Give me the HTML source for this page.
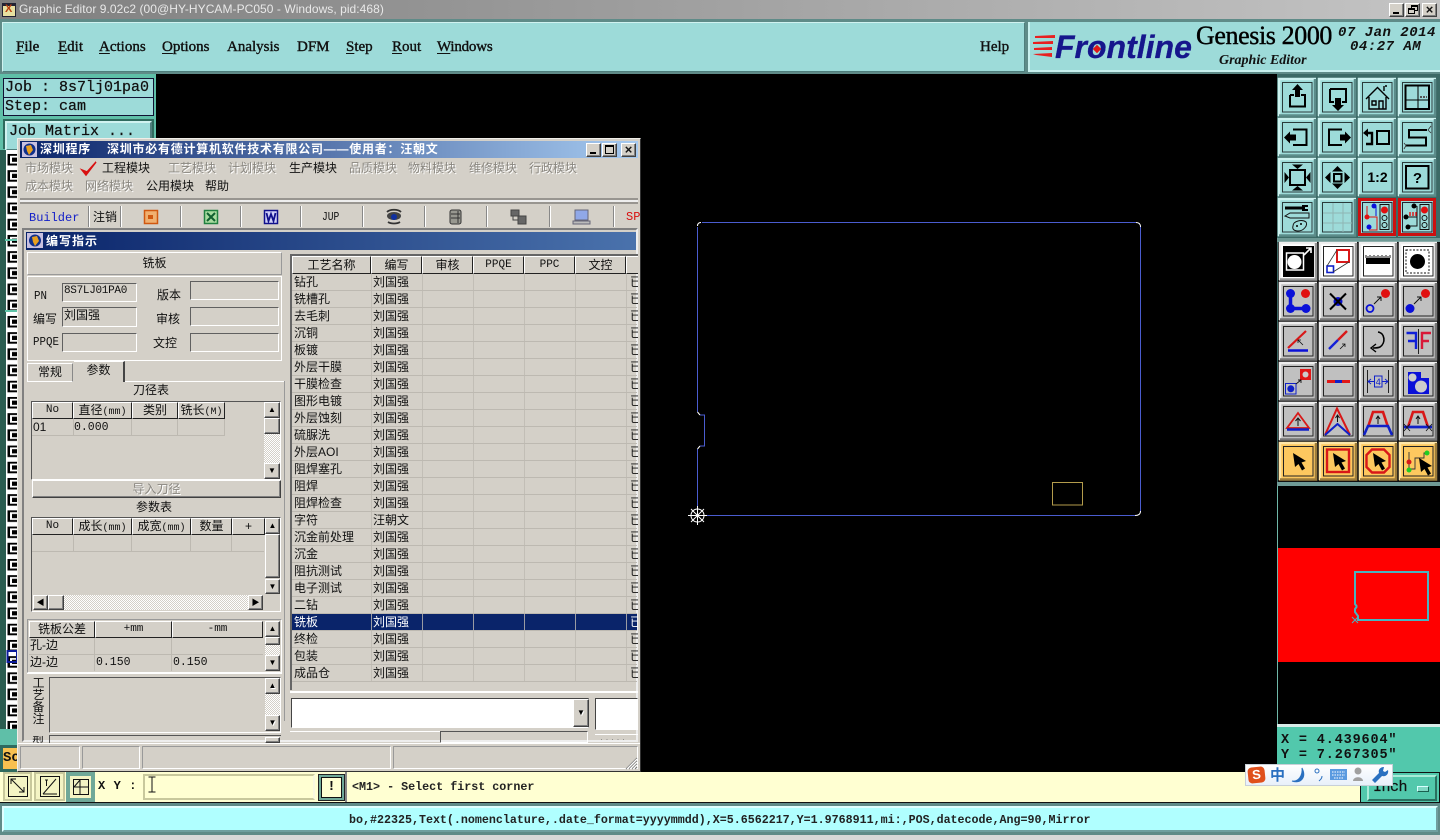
<!DOCTYPE html>
<html><head><meta charset="utf-8"><title>Graphic Editor</title>
<style>
html,body{margin:0;padding:0;background:#000}
#p{position:relative;width:1440px;height:840px;overflow:hidden;background:#000;font-family:"Liberation Sans","WenQuanYi Zen Hei","Noto Sans CJK SC",sans-serif;font-size:12px;color:#111}
#p div,#p span.a{position:absolute;box-sizing:border-box}
#p svg{position:absolute;left:0;top:0}
.t{white-space:nowrap}
.up{background:#d4d0c8;border:1px solid;border-color:#fff #404040 #404040 #fff;box-shadow:inset -1px -1px 0 #808080}
.sk{background:#d4d0c8;border:1px solid;border-color:#606060 #fff #fff #606060}
.dis{color:#8a8780;text-shadow:1px 1px 0 #fff}
.m{font-family:"Liberation Serif",serif;font-size:15px;-webkit-text-stroke:.4px #111;color:#111;white-space:nowrap;top:39px}
.m u{text-underline-offset:2px}
.mo{font-family:"Liberation Mono",monospace}
.h{background:#d4d0c8;border:1px solid;border-color:#fff #222 #222 #fff;text-align:center;line-height:14px;height:17px;white-space:nowrap;overflow:hidden}
.d{background:repeating-conic-gradient(#d4d0c8 0 25%,#fff 0 50%) 0 0/2px 2px}
.ar{font-size:8px;line-height:14px;text-align:center;color:#000}
.r{position:relative!important;height:17px;border-bottom:1px solid #bdb9b1;line-height:16px}
.r b{position:absolute;left:2px;font-weight:normal;white-space:nowrap}
.r b+b{left:81px}
.r i{position:absolute;left:338px;font-style:normal}
.s{background:#0a246a;color:#fff;border-bottom-color:#bdb9b1}
.v{width:1px;background:#bdb9b1}
</style></head><body><div id="p">

<!-- canvas -->
<svg width="1440" height="840" viewBox="0 0 1440 840">
<g fill="none" stroke="#4a5ccf" stroke-width="1">
<path d="M702 222.5H1136M1140.5 227V511M1135 515.5H697.5V449M697.5 412V227M700 415H704.5V446H700"/>
</g>
<g fill="none" stroke="#fff" stroke-width="1">
<path d="M697.5 226Q697.5 222.5 701 222.5M1136 222.5Q1140.5 222.5 1140.5 227M1140.5 511Q1140.5 515.5 1135 515.5M697.5 412L700 415M700 446L697.5 449"/>
<circle cx="697.5" cy="515.5" r="6.5"/><path d="M688 515.5H707M697.5 506V525M691 509L704 522M704 509L691 522"/>
</g>
<rect x="1052.5" y="482.5" width="30" height="22.5" fill="none" stroke="#b39c4c"/>
</svg>

<!-- title bar -->
<div style="left:0;top:0;width:1440px;height:19px;background:linear-gradient(90deg,#7f7f7f,#c4c4c4)"></div>
<div style="left:2px;top:3px;width:14px;height:14px;background:#e8e0a0;border:1px solid #223;border-top:3px solid #223"></div>
<div class="t" style="left:5px;top:4px;color:#b84010;font-weight:bold;font-size:11px;line-height:11px">X</div>
<div class="t" style="left:19px;top:2px;color:#e8e8e8;font-size:12px;letter-spacing:.05px">Graphic Editor 9.02c2 (00@HY-HYCAM-PC050 - Windows, pid:468)</div>
<div class="up" style="left:1389px;top:3px;width:15px;height:14px"><div style="left:3px;bottom:2px;width:6px;height:2px;background:#000"></div></div>
<div class="up" style="left:1405px;top:3px;width:15px;height:14px"><div style="left:5px;top:1px;width:7px;height:6px;border:1px solid #000;border-top-width:2px"></div><div style="left:2px;top:4px;width:7px;height:6px;border:1px solid #000;border-top-width:2px;background:#d4d0c8"></div></div>
<div class="up" style="left:1422px;top:3px;width:15px;height:14px;font-size:13px;line-height:11px;text-align:center;font-weight:bold">×</div>

<!-- menu bar -->
<div style="left:0;top:19px;width:1440px;height:55px;background:#5f8b88"></div>
<div style="left:2px;top:22px;width:1023px;height:50px;background:#9ddbd9;border:1px solid;border-color:#d0f2f0 #4f7f7d #4f7f7d #d0f2f0"></div>
<div class="m" style="left:16px"><u>F</u>ile</div>
<div class="m" style="left:58px"><u>E</u>dit</div>
<div class="m" style="left:99px"><u>A</u>ctions</div>
<div class="m" style="left:162px"><u>O</u>ptions</div>
<div class="m" style="left:227px">Analysis</div>
<div class="m" style="left:297px">DFM</div>
<div class="m" style="left:346px"><u>S</u>tep</div>
<div class="m" style="left:392px"><u>R</u>out</div>
<div class="m" style="left:437px;letter-spacing:-.2px"><u>W</u>indows</div>
<div class="m" style="left:980px">Help</div>

<!-- logo panel -->
<div style="left:1028px;top:22px;width:412px;height:50px;background:#9ddbd9;border-bottom:2px solid #c9f1ef;border-left:2px solid #c9f1ef"></div>
<svg width="1440" height="80" viewBox="0 0 1440 80"><path d="M1035 36L1055 35V38L1035 38ZM1033 42L1053 41V44L1033 44ZM1034 48L1052 47V50L1034 50ZM1033 54L1052 53V57L1036 55Z" fill="#e82020"/></svg>
<div class="t" style="left:1055px;top:29px;font:italic bold 32px/36px 'Liberation Sans',sans-serif;color:#16168c;-webkit-text-stroke:.3px #16168c">Frontline</div>
<div style="left:1094px;top:46px;width:6px;height:6px;background:#e01818;transform:rotate(45deg)"></div>
<div class="t" style="left:1196px;top:20px;font:26px/32px 'Liberation Serif',serif;-webkit-text-stroke:.4px #000;color:#000;letter-spacing:-.4px">Genesis 2000</div>
<div class="t" style="left:1219px;top:53px;font:italic bold 14px/16px 'Liberation Serif',serif;color:#111">Graphic Editor</div>
<div class="t mo" style="left:1338px;top:25px;font-style:italic;font-weight:bold;font-size:14px;line-height:16px;color:#111;letter-spacing:.5px">07 Jan 2014</div>
<div class="t mo" style="left:1350px;top:39px;font-style:italic;font-weight:bold;font-size:14px;line-height:16px;color:#111;letter-spacing:.5px">04:27 AM</div>

<!-- left job panel -->
<div style="left:0;top:74px;width:156px;height:76px;background:#5fbfa8"></div>
<div class="mo t" style="left:3px;top:78px;width:151px;height:20px;background:#9ddbd9;border:1px solid #113;line-height:18px;font-size:15px;padding-left:1px;-webkit-text-stroke:.25px #111">Job : 8s7lj01pa0</div>
<div class="mo t" style="left:3px;top:97px;width:151px;height:19px;background:#9ddbd9;border:1px solid #113;line-height:17px;font-size:15px;padding-left:1px;-webkit-text-stroke:.25px #111">Step: cam</div>
<div style="left:3px;top:119px;width:151px;height:30px;background:#2f6a5e"></div>
<div class="mo t" style="left:5px;top:121px;width:147px;height:30px;background:#9ddbd9;border:2px solid;border-color:#d0f2f0 #4f7f7d #4f7f7d #d0f2f0;line-height:18px;font-size:15px;padding-left:2px;-webkit-text-stroke:.25px #111">Job Matrix ...</div>

<!-- left strip -->
<svg width="20" height="840" viewBox="0 0 20 840">
<defs><pattern id="gl" width="20" height="16.2" patternUnits="userSpaceOnUse" y="152"><rect width="20" height="16.2" fill="#fff"/><rect x="0" width="6" height="16.2" fill="#2a5c50"/><path d="M7.5 2H17V3.8H10V11.5H17V13.5H7.5Z" fill="#000"/><path d="M12 5.6H17V9.8H12Z" fill="#000"/></pattern></defs>
<rect y="150" width="20" height="580" fill="url(#gl)"/>
<rect y="239" x="5" width="15" height="2" fill="#60c4a8"/><rect y="310" x="5" width="15" height="2" fill="#60c4a8"/>
<path d="M7.5 651H17V662H7.5Z" fill="none" stroke="#0a1a9a" stroke-width="2"/>
<rect y="729" width="20" height="16" fill="#5fbfa8"/><rect y="745" width="20" height="27" fill="#2f6a5e"/>
</svg>
<div class="t" style="left:3px;top:748px;width:16px;height:21px;background:#f8c050;font:bold 14px/20px 'Liberation Mono',monospace">Sc</div>

<!-- right toolbar -->
<div style="left:1277px;top:74px;width:163px;height:412px;background:#3c6a66"></div>
<svg width="1440" height="490" viewBox="0 0 1440 490">
<defs>
<g id="bt"><rect width="38" height="38.5" fill="#9ddbd9"/><path d="M1 38V1H38" fill="none" stroke="#cdf2f0" stroke-width="2.5"/><path d="M37 1V37.5H1" fill="none" stroke="#5c8c8a" stroke-width="2.5"/><rect x="4.5" y="4.5" width="29.5" height="29.5" fill="none" stroke="#2a3a3a"/></g>
<g id="bg"><rect width="38" height="38.5" fill="#c0c0c0"/><path d="M1 38V1H38" fill="none" stroke="#eee" stroke-width="2.5"/><path d="M37 1V37.5H1" fill="none" stroke="#777" stroke-width="2.5"/><rect x="4.5" y="4.5" width="29.5" height="29.5" fill="none" stroke="#222"/></g>
<g id="by"><rect width="38" height="38.5" fill="#fdc85f"/><path d="M1 38V1H38" fill="none" stroke="#ffe6a8" stroke-width="2.5"/><path d="M37 1V37.5H1" fill="none" stroke="#9c7c3c" stroke-width="2.5"/><rect x="4.5" y="4.5" width="29.5" height="29.5" fill="none" stroke="#222"/></g>
<g id="bw"><rect width="38" height="38.5" fill="#fff"/><path d="M1 38V1H38" fill="none" stroke="#eee" stroke-width="2.5"/><path d="M37 1V37.5H1" fill="none" stroke="#999" stroke-width="2.5"/><rect x="4.5" y="4.5" width="29.5" height="29.5" fill="none" stroke="#222"/></g>
<path id="cur" d="M0 0L2 14L5.5 11L9 17.5L12 15.5L8.5 9.5L13 8Z" fill="#000"/>
</defs>
<!-- Row 1 -->
<g transform="translate(1278,78)"><use href="#bt"/><path d="M12 17V28.5H27V17H23" fill="none" stroke="#000" stroke-width="2"/><path d="M12 17H16" stroke="#000" stroke-width="2"/><path d="M19.5 6L25 12H22V19H17V12H14Z"/></g>
<g transform="translate(1318,78)"><use href="#bt"/><path d="M12 11H28V24H24M16 24H12V11" fill="none" stroke="#000" stroke-width="2"/><path d="M20 33L14 27H17V20H23V27H26Z"/></g>
<g transform="translate(1358,78)"><use href="#bt"/><path d="M8 21L19.5 9.5L31 21M11 19V31H28V19M14 23H18V27H14ZM21 31V23H25V31M26 13V8M27 8H29" fill="none" stroke="#000" stroke-width="1.4"/></g>
<g transform="translate(1398,78)"><use href="#bt"/><rect x="7.5" y="7.5" width="23.5" height="23.5" fill="none" stroke="#000" stroke-width="2"/><path d="M8 22H31M20 8V31" stroke="#000"/><path d="M22 19H29" stroke="#555" stroke-width="2" stroke-dasharray="2 1"/></g>
<!-- Row 2 -->
<g transform="translate(1278,118)"><use href="#bt"/><path d="M15 11.5H28.5V27H15" fill="none" stroke="#000" stroke-width="2"/><path d="M6 19.5L12 13.5V16.5H18V22.5H12V25.5Z"/></g>
<g transform="translate(1318,118)"><use href="#bt"/><path d="M24 11.5H11V27H24" fill="none" stroke="#000" stroke-width="2"/><path d="M33 19.5L27 13.5V16.5H22V22.5H27V25.5Z"/></g>
<g transform="translate(1358,118)"><use href="#bt"/><rect x="19" y="13" width="12" height="13" fill="none" stroke="#000" stroke-width="2"/><path d="M9 15H14V26H8" fill="none" stroke="#000" stroke-width="2.4"/><path d="M5 15L10 10.5V19Z"/></g>
<g transform="translate(1398,118)"><use href="#bt"/><path d="M29 12H11V19.5H28V27.5H8" fill="none" stroke="#000" stroke-width="2"/><path d="M33 8L30 12L33 15M6 25L8 27.5L6 31" fill="none" stroke="#333" stroke-width=".8"/></g>
<!-- Row 3 -->
<g transform="translate(1278,158)"><use href="#bt"/><rect x="12" y="12" width="15" height="15" fill="none" stroke="#000" stroke-width="2"/><path d="M19.5 11L14 6.5H25ZM19.5 28L14 32.5H25ZM11 19.5L6.5 14V25ZM28 19.5L32.5 14V25Z"/></g>
<g transform="translate(1318,158)"><use href="#bt"/><rect x="16" y="16" width="7.5" height="7.5" fill="none" stroke="#000" stroke-width="2"/><path d="M19.5 8L14 13.5H25ZM19.5 31L14 25.5H25ZM7 19.5L12.5 14V25ZM32 19.5L26.5 14V25Z"/></g>
<g transform="translate(1358,158)"><use href="#bt"/><text x="19.5" y="24" text-anchor="middle" font-family="Liberation Sans" font-weight="bold" font-size="14">1:2</text></g>
<g transform="translate(1398,158)"><use href="#bt"/><rect x="8" y="8" width="22.5" height="22.5" fill="none" stroke="#000" stroke-width="2"/><text x="19.5" y="25" text-anchor="middle" font-family="Liberation Sans" font-weight="bold" font-size="15">?</text></g>
<!-- Row 4 -->
<g transform="translate(1278,198)"><use href="#bt"/><path d="M7 10H25" stroke="#000" stroke-width="3"/><path d="M24 7H30V9H27V11H30V13H24Z"/><path d="M7 18L12 15H31V20H12Z" fill="none" stroke="#111"/><path d="M15 28C15 23 24 21 28 24C30 27 26 33 20 33C16 33 14 31 15 28Z" fill="none" stroke="#111"/><circle cx="19" cy="28" r="1" /><circle cx="23" cy="26" r="1"/></g>
<g transform="translate(1318,198)"><use href="#bt"/><path d="M5 15H34M5 25H34M15 5V34M25 5V34" stroke="#8fb6b4"/></g>
<g transform="translate(1358,198)"><rect width="38" height="38.5" fill="#9ddbd9"/><rect x="1.5" y="1.5" width="35" height="35" fill="none" stroke="#cc1010" stroke-width="3"/><rect x="4.5" y="4.5" width="29.5" height="29.5" fill="none" stroke="#223"/><path d="M9 19H19V32H11M9 19V8" fill="none" stroke="#e01010"/><path d="M15 9H18V18" fill="none" stroke="#0a10d8"/><circle cx="16" cy="8" r="2.5" fill="#0a10d8"/><circle cx="9" cy="19" r="2.5" fill="#e01010"/><circle cx="11" cy="29" r="2.5" fill="#0a10d8"/><rect x="22" y="6.5" width="9" height="25" fill="none" stroke="#111"/><circle cx="26.5" cy="12" r="3.5" fill="#e01010"/><circle cx="26.5" cy="20" r="2.5" fill="none" stroke="#111"/><circle cx="26.5" cy="27" r="2.5" fill="none" stroke="#111"/></g>
<g transform="translate(1398,198)"><rect width="38" height="38.5" fill="#9ddbd9"/><rect x="1.5" y="1.5" width="35" height="35" fill="none" stroke="#cc1010" stroke-width="3"/><rect x="4.5" y="4.5" width="29.5" height="29.5" fill="none" stroke="#223"/><path d="M8 19H19V8M19 19V28H10" fill="none" stroke="#111"/><path d="M12 18V14M15 18V14M18 18V14" stroke="#e01010" stroke-width="1.4"/><circle cx="16" cy="8" r="2.5"/><circle cx="8" cy="19" r="2.5"/><circle cx="10" cy="29" r="2.5"/><rect x="22" y="6.5" width="9" height="25" fill="none" stroke="#111"/><circle cx="26.5" cy="12" r="3.5" fill="#e01010"/><circle cx="26.5" cy="20" r="2.5" fill="none" stroke="#111"/><circle cx="26.5" cy="27" r="2.5" fill="none" stroke="#111"/></g>

<rect x="1277" y="238" width="163" height="4" fill="#6f9a96"/>
<rect x="1278" y="242" width="162" height="240" fill="#111"/>
<!-- G2 Row 1 -->
<g transform="translate(1279,242)"><use href="#bw"/><rect x="4" y="4" width="31" height="31"/><rect x="7.5" y="11" width="17" height="17" fill="none" stroke="#fff" stroke-width="1.5"/><circle cx="15.5" cy="20" r="7" fill="#fff"/><path d="M25 13L32 6M27 6H32V11" fill="none" stroke="#fff" stroke-width="1.6"/></g>
<g transform="translate(1319,242)"><use href="#bw"/><rect x="18" y="8" width="12" height="12" fill="none" stroke="#d81818" stroke-width="2"/><rect x="8" y="24" width="6.5" height="6.5" fill="none" stroke="#1020c8" stroke-width="1.6"/><path d="M8 24L18 8M14 30L30 20" stroke="#333" stroke-width=".8"/></g>
<g transform="translate(1359,242)"><use href="#bw"/><rect x="7" y="16" width="24" height="6"/><path d="M7 16V13M9 16V14M11 16V13M13 16V14M15 16V13M17 16V14M19 16V13M21 16V14M23 16V13M25 16V14M27 16V13M29 16V14M31 16V13" stroke="#000" stroke-width=".9"/></g>
<g transform="translate(1399,242)"><use href="#bw"/><rect x="7" y="8" width="23" height="23" fill="none" stroke="#111" stroke-dasharray="2 1.5"/><circle cx="18.5" cy="19.5" r="7.5"/></g>
<!-- G2 Row 2 -->
<g transform="translate(1279,282)"><use href="#bg"/><path d="M11.5 11.5V26.5H27" stroke="#0a10d8" stroke-width="3.5" fill="none"/><circle cx="11.5" cy="11.5" r="4.5" fill="#0a10d8"/><circle cx="11.5" cy="26.5" r="4.5" fill="#0a10d8"/><circle cx="27" cy="26.5" r="4.5" fill="#0a10d8"/><circle cx="26.5" cy="11.5" r="4.5" fill="#e01010"/></g>
<g transform="translate(1319,282)"><use href="#bg"/><circle cx="19" cy="19.5" r="4.5" fill="#0a10c8"/><path d="M11 11.5L27 27.5M27 11.5L11 27.5" stroke="#000" stroke-width="2"/></g>
<g transform="translate(1359,282)"><use href="#bg"/><circle cx="26.5" cy="11.5" r="4.5" fill="#e01010"/><circle cx="11" cy="26.5" r="3.5" fill="none" stroke="#0a10d8" stroke-width="1.8"/><path d="M15 22L22 15M18 15H22V19" stroke="#111" fill="none"/></g>
<g transform="translate(1399,282)"><use href="#bg"/><circle cx="26.5" cy="11.5" r="4.5" fill="#e01010"/><circle cx="11" cy="26.5" r="4.5" fill="#0a10d8"/><path d="M15 22L22 15M18 15H22V19" stroke="#111" fill="none"/></g>
<!-- G2 Row 3 -->
<g transform="translate(1279,322)"><use href="#bg"/><path d="M9 26L27 9" stroke="#d81818" stroke-width="2.2"/><path d="M9 28.5H29" stroke="#0a10d8" stroke-width="2.5"/><path d="M24 23L19 18M19 21V18H22" fill="none" stroke="#111" stroke-width=".8"/></g>
<g transform="translate(1319,322)"><use href="#bg"/><path d="M19 18L28 9" stroke="#d81818" stroke-width="2.4"/><path d="M10 27L19 18" stroke="#1420d8" stroke-width="2.4"/><path d="M21 27L26 22M23 22H26V25" fill="none" stroke="#111" stroke-width=".8"/></g>
<g transform="translate(1359,322)"><use href="#bg"/><path d="M19 10C26 11 27 21 21 25C19 26 17 26 14 26" fill="none" stroke="#000" stroke-width="1.6"/><path d="M17 22L12 26L17 30" fill="none" stroke="#000" stroke-width="1.4"/></g>
<g transform="translate(1399,322)"><use href="#bg"/><path d="M7.5 11H17V27M9 19H16" fill="none" stroke="#1020d8" stroke-width="2.4"/><path d="M19.5 7V32" stroke="#222"/><path d="M23 27V11H32M23 19H30" fill="none" stroke="#d81838" stroke-width="2.4"/></g>
<!-- G2 Row 4 -->
<g transform="translate(1279,362)"><use href="#bg"/><rect x="21" y="7" width="11" height="11" fill="#e01818"/><circle cx="26.5" cy="12.5" r="3" fill="#ccc"/><rect x="6.5" y="21.5" width="10.5" height="10.5" fill="none" stroke="#1020c8" stroke-width="1"/><circle cx="11.8" cy="26.8" r="3.5" fill="#1020c8"/><path d="M17 22L22 18M19 18H22V21" fill="none" stroke="#111" stroke-width=".9"/></g>
<g transform="translate(1319,362)"><use href="#bg"/><path d="M8 19.5H31" stroke="#e01818" stroke-width="3"/><path d="M16 19.5H23" stroke="#1020c8" stroke-width="3"/></g>
<g transform="translate(1359,362)"><use href="#bg"/><path d="M8.5 8V31M29.5 8V31" stroke="#222"/><path d="M9 19.5H16M23 19.5H29M12 17L9 19.5L12 22M26 17L29 19.5L26 22" fill="none" stroke="#1020c8" stroke-width=".9"/><rect x="15.5" y="14" width="7.5" height="11" fill="none" stroke="#1020c8"/><text x="19.2" y="23" text-anchor="middle" font-size="9" fill="#1020c8" font-family="Liberation Sans">4</text></g>
<g transform="translate(1399,362)"><use href="#bg"/><path d="M9 10H22V16H30V32H9Z" fill="#0a10d8"/><circle cx="13.5" cy="15.5" r="4" fill="#ccc"/><circle cx="22" cy="24.5" r="6" fill="#ccc"/></g>
<!-- G2 Row 5 -->
<g transform="translate(1279,402)"><use href="#bg"/><path d="M19 11L8 26H30Z" fill="none" stroke="#d81818" stroke-width="1.8"/><path d="M8 27.5H30" stroke="#1020c8" stroke-width="2.4"/><path d="M19 24V17M16.5 19L19 16L21.5 19" fill="none" stroke="#111"/></g>
<g transform="translate(1319,402)"><use href="#bg"/><path d="M6 33L18 6.5L31 33" fill="none" stroke="#d81818" stroke-width="2"/><path d="M6 33L18.5 22L31 33" fill="none" stroke="#1020c8" stroke-width="2"/><path d="M18.5 20V14M16.5 16L18.5 13L20.5 16" fill="none" stroke="#111"/></g>
<g transform="translate(1359,402)"><use href="#bg"/><path d="M9 25L14 10H24L29 25" fill="none" stroke="#d81818" stroke-width="2.6"/><path d="M5 33L9 24H29L33 33" fill="none" stroke="#1020c8" stroke-width="2.6"/><path d="M19 22V15M17 17L19 14L21 17" fill="none" stroke="#111"/></g>
<g transform="translate(1399,402)"><use href="#bg"/><path d="M9 25L14 10H24L29 25" fill="none" stroke="#d81818" stroke-width="2.6"/><path d="M5 25H33" stroke="#1020c8" stroke-width="2.8"/><path d="M5 22L11 29M11 22L5 29M27 22L33 29M33 22L27 29" stroke="#111" stroke-width=".8"/><path d="M19 22V15M17 17L19 14L21 17" fill="none" stroke="#111"/></g>
<!-- G2 Row 6 -->
<g transform="translate(1279,442)"><use href="#by"/><use href="#cur" x="14" y="11"/></g>
<g transform="translate(1319,442)"><use href="#by"/><rect x="8" y="7.5" width="22" height="22.5" fill="none" stroke="#d81818" stroke-width="2.4"/><use href="#cur" x="14" y="11"/></g>
<g transform="translate(1359,442)"><use href="#by"/><path d="M13 7.5H25L30.5 13V25L25 30.5H13L7.5 25V13Z" fill="none" stroke="#d81818" stroke-width="2.4"/><use href="#cur" x="14" y="11"/></g>
<g transform="translate(1399,442)"><use href="#by"/><path d="M10 10V27H16V16H25V11H28" fill="none" stroke="#333" stroke-width=".9"/><circle cx="10" cy="20" r="2.5" fill="#d81818"/><circle cx="10" cy="28" r="2.5" fill="#22cc22"/><circle cx="28" cy="11" r="2.5" fill="#22cc22"/><use href="#cur" x="20" y="16"/></g>
</svg>

<!-- overview -->
<div style="left:1277px;top:482px;width:163px;height:4px;background:#6f9a96"></div>
<div style="left:1277px;top:486px;width:1px;height:240px;background:#6fb8a8"></div>
<div style="left:1278px;top:548px;width:162px;height:114px;background:#ff0000"></div>
<svg width="1440" height="640" viewBox="0 0 1440 640"><path d="M1355 572H1428V620H1358V616L1355 612V609L1356.5 607V606L1355 604Z" fill="none" stroke="#48b4c0" stroke-width="2"/><path d="M1352 617L1358 623M1358 617L1352 623" stroke="#48b4c0"/></svg>

<!-- coordinates -->
<div style="left:1277px;top:724px;width:163px;height:3px;background:#d8ece8"></div>
<div style="left:1277px;top:727px;width:163px;height:46px;background:#52c8ac"></div>
<div class="mo t" style="left:1281px;top:733px;font-size:13.5px;line-height:16px;font-weight:bold;letter-spacing:.85px;color:#111">X = 4.439604"</div>
<div class="mo t" style="left:1281px;top:748px;font-size:13.5px;line-height:16px;font-weight:bold;letter-spacing:.85px;color:#111">Y = 7.267305"</div>

<!-- bottom -->
<div style="left:0;top:772px;width:1440px;height:31px;background:#ffffd2;border-bottom:1px solid #111"></div>
<div style="left:3px;top:772px;width:29px;height:29px;background:#f4f4c4;border:2px solid #c8c89c"></div>
<div style="left:34px;top:772px;width:31px;height:29px;background:#f4f4c4;border:2px solid #c8c89c"></div>
<div style="left:66px;top:772px;width:29px;height:30px;background:#f4f4c4;border:4px solid #6fa898"></div>
<div class="t" style="left:98px;top:779px;font:bold 12px/15px 'Liberation Mono',monospace;letter-spacing:.6px">X Y :</div>
<div style="left:143px;top:774px;width:172px;height:26px;border:2px solid;border-color:#c8c89c #f8f8e0 #c8c89c #c8c89c;background:#ffffd2"></div>
<svg width="1440" height="840" viewBox="0 0 1440 840">
<rect x="8.5" y="776.5" width="19" height="20" fill="none" stroke="#111"/><path d="M11 779L24 792M24 787V792H19M11 784V779H16" fill="none" stroke="#111"/>
<rect x="40.5" y="776.5" width="19" height="20" fill="none" stroke="#111"/><path d="M43 794L56 779M43 794H57" fill="none" stroke="#111"/><path d="M45 780H48M46.5 780V786" stroke="#111"/>
<rect x="73.5" y="779.5" width="15" height="15" fill="none" stroke="#111"/><path d="M80 780V794M74 787H88M74 787L80 780" stroke="#111" fill="none"/>
<path d="M148.500 777H155.500M152 777V792M148.500 792H155.500" stroke="#111" fill="none"/>
</svg>
<div style="left:318px;top:774px;width:27px;height:27px;background:#6fa898;border:1px solid #222"></div>
<div style="left:321px;top:777px;width:21px;height:21px;background:#ffffd2;border:1px solid #111;font:bold 14px/19px 'Liberation Mono',monospace;text-align:center">!</div>
<div style="left:345px;top:772px;width:2px;height:30px;background:#888"></div>
<div class="mo t" style="left:352px;top:780px;font-size:11.7px;line-height:14px;font-weight:bold;color:#222">&lt;M1&gt; - Select first corner</div>
<div style="left:1360px;top:772px;width:80px;height:31px;background:#52c8ac;border:1px solid #111"></div>
<div style="left:1367px;top:775px;width:70px;height:26px;background:#52c8ac;border:2px solid;border-color:#a8ecd8 #2a7060 #2a7060 #a8ecd8;"></div>
<div class="t" style="left:1373px;top:779px;font:15px/18px 'Liberation Mono',monospace;-webkit-text-stroke:.2px #111;letter-spacing:-.5px">Inch</div>
<div style="left:1417px;top:786px;width:12px;height:6px;background:#7fd8c4;border:1px solid;border-color:#d8ffff #1a6050 #1a6050 #d8ffff"></div>

<div style="left:0;top:803px;width:1440px;height:32px;background:#5f8b88"></div>
<div style="left:2px;top:806px;width:1436px;height:26px;background:#b0ffff;border:2px solid;border-color:#e0ffff #6f9f9f #6f9f9f #e0ffff"></div>
<div style="left:0;top:835px;width:1440px;height:5px;background:#d8d8d8"></div>
<div class="mo t" style="left:349px;top:813px;font-size:11.67px;line-height:14px;font-weight:bold;color:#222">bo,#22325,Text(.nomenclature,.date_format=yyyymmdd),X=5.6562217,Y=1.9768911,mi:,POS,datecode,Ang=90,Mirror</div>

<!-- IME bar -->
<div style="left:1245px;top:764px;width:148px;height:22px;background:linear-gradient(#fff,#e8f0fa);border:1px solid #c8d0d8"></div>
<div class="t" style="left:1248px;top:767px;width:17px;height:16px;background:#e0501c;border-radius:4px;color:#fff;font:bold 13px/16px 'Liberation Sans',sans-serif;text-align:center;transform:rotate(-6deg)">S</div>
<div class="t" style="left:1270px;top:766px;color:#2a70c0;font-size:15px;line-height:18px;font-family:'Noto Sans CJK SC',sans-serif;font-weight:bold">中</div>
<svg width="1440" height="840" viewBox="0 0 1440 840">
<path d="M1302 768C1307 778 1300 784 1292 781C1298 782 1303 776 1302 768Z" fill="#2a70c0" stroke="#2a70c0"/>
<circle cx="1317" cy="771" r="2" fill="none" stroke="#2a70c0"/><path d="M1322 776C1322 779 1320 780 1319 781" fill="none" stroke="#2a70c0"/>
<rect x="1330" y="769" width="17" height="11" fill="#5a9ae0"/><path d="M1332 772H1345M1332 775H1345M1334 778H1343" stroke="#fff" stroke-dasharray="1.5 1"/>
<circle cx="1358" cy="771" r="3.5" fill="#a0a0a0"/><path d="M1353 781C1353 776 1363 776 1363 781Z" fill="#a0a0a0"/>
<path d="M1384 767C1380 767 1378 770 1379 773L1372 780L1375 783L1382 776C1386 777 1389 774 1388 770L1385 772L1383 771Z" fill="#2a70c0"/>
</svg>

<!-- dialog -->
<div style="left:17px;top:138px;width:624px;height:634px;background:#d4d0c8;border:1px solid;border-color:#f0eee8 #333 #333 #f0eee8"></div>
<div style="left:20px;top:141px;width:618px;height:17px;background:linear-gradient(90deg,#0a246a,#a6caf0)"></div>
<svg width="640" height="250" viewBox="0 0 640 250">
<rect x="22" y="142" width="15" height="15" fill="#c8c0e0"/><circle cx="29.5" cy="149.5" r="6" fill="#10308c"/><path d="M26 146L31 145L33 150L29 155L27 151Z" fill="#e8a020"/>
<path d="M82 170L86 175L96 162L87 172Z" fill="#d81010" stroke="#d81010" stroke-width="1.5"/>
</svg>
<div class="t" style="left:40px;top:142px;color:#fff;font-weight:bold;line-height:15px;letter-spacing:.75px">深圳程序</div>
<div class="t" style="left:107px;top:142px;color:#fff;font-weight:bold;line-height:15px;letter-spacing:.75px">深圳市必有德计算机软件技术有限公司——使用者：汪朝文</div>
<div class="up" style="left:586px;top:143px;width:15px;height:14px"><div style="left:3px;bottom:2px;width:6px;height:2px;background:#000"></div></div>
<div class="up" style="left:602px;top:143px;width:15px;height:14px"><div style="left:2px;top:1px;width:9px;height:9px;border:1px solid #000;border-top-width:2px"></div></div>
<div class="up" style="left:621px;top:143px;width:15px;height:14px;font-size:13px;line-height:11px;text-align:center;font-weight:bold">×</div>

<div class="t dis" style="left:25px;top:159px">市场模块</div>
<div class="t" style="left:102px;top:159px">工程模块</div>
<div class="t dis" style="left:168px;top:159px">工艺模块</div>
<div class="t dis" style="left:228px;top:159px">计划模块</div>
<div class="t" style="left:289px;top:159px">生产模块</div>
<div class="t dis" style="left:349px;top:159px">品质模块</div>
<div class="t dis" style="left:408px;top:159px">物料模块</div>
<div class="t dis" style="left:469px;top:159px">维修模块</div>
<div class="t dis" style="left:529px;top:159px">行政模块</div>
<div class="t dis" style="left:25px;top:177px">成本模块</div>
<div class="t dis" style="left:85px;top:177px">网络模块</div>
<div class="t" style="left:146px;top:177px">公用模块</div>
<div class="t" style="left:205px;top:177px">帮助</div>

<div style="left:20px;top:198px;width:618px;height:6px;border-top:2px solid #989590;border-bottom:2px solid #989590;background:#eee"></div>
<div class="t mo" style="left:29px;top:211px;color:#1420c8;font-size:12px;line-height:14px">Builder</div>
<div class="t" style="left:93px;top:208px">注销</div>
<div style="left:88px;top:206px;width:2px;height:21px;background:linear-gradient(90deg,#888 50%,#fff 50%)"></div>
<div style="left:120px;top:206px;width:2px;height:21px;background:linear-gradient(90deg,#888 50%,#fff 50%)"></div>
<div style="left:180px;top:206px;width:2px;height:21px;background:linear-gradient(90deg,#888 50%,#fff 50%)"></div>
<div style="left:240px;top:206px;width:2px;height:21px;background:linear-gradient(90deg,#888 50%,#fff 50%)"></div>
<div style="left:300px;top:206px;width:2px;height:21px;background:linear-gradient(90deg,#888 50%,#fff 50%)"></div>
<div style="left:362px;top:206px;width:2px;height:21px;background:linear-gradient(90deg,#888 50%,#fff 50%)"></div>
<div style="left:424px;top:206px;width:2px;height:21px;background:linear-gradient(90deg,#888 50%,#fff 50%)"></div>
<div style="left:486px;top:206px;width:2px;height:21px;background:linear-gradient(90deg,#888 50%,#fff 50%)"></div>
<div style="left:549px;top:206px;width:2px;height:21px;background:linear-gradient(90deg,#888 50%,#fff 50%)"></div>
<div style="left:613px;top:206px;width:2px;height:21px;background:linear-gradient(90deg,#888 50%,#fff 50%)"></div>
<svg width="640" height="230" viewBox="0 0 640 230">
<rect x="144.500" y="210.500" width="13" height="13" fill="#f0b070" stroke="#d05810" stroke-width="1.500"/><rect x="148" y="215" width="5" height="4" fill="#d05810"/>
<rect x="204.500" y="210.500" width="13" height="13" fill="#a8dca0" stroke="#208040" stroke-width="1.500"/><path d="M207 213L215 221M215 213L207 221" stroke="#106030" stroke-width="2"/>
<rect x="264.500" y="210.500" width="13" height="13" fill="#d0d0f8" stroke="#10108c" stroke-width="1.500"/><path d="M266.500 213L268.500 221L271 214L273.500 221L275.500 213" stroke="#10108c" stroke-width="1.800" fill="none"/>
<ellipse cx="394" cy="216" rx="7" ry="4" fill="#444"/><circle cx="394" cy="217" r="3" fill="#1030a0"/><path d="M387 212C390 209 398 209 401 212M388 222C391 224 397 224 400 222" stroke="#333" fill="none" stroke-width="1.800"/>
<rect x="450" y="210" width="11" height="14" rx="2" fill="#989890" stroke="#333"/><path d="M451 214H460M451 218H460M458 211V223" stroke="#333"/>
<rect x="511" y="210" width="8" height="6" fill="#666" stroke="#444"/><rect x="518" y="216" width="8" height="8" fill="#666" stroke="#444"/><path d="M513 216V220H518" stroke="#444" fill="none"/>
<rect x="575" y="210" width="13" height="10" fill="#90a8e8" stroke="#667"/><rect x="573" y="221" width="17" height="3" fill="#bbb" stroke="#667"/>
</svg>
<div class="t mo" style="left:322px;top:210px;transform:scaleX(.8);transform-origin:0 0;font-size:12px">JUP</div>
<div class="t mo" style="left:626px;top:210px;color:#d81010;font-size:12px">SP</div>

<!-- subwindow -->
<div style="left:22px;top:228px;width:616px;height:514px;border:2px solid;border-color:#808080 #eee #eee #808080"></div>
<div style="left:26px;top:232px;width:610px;height:18px;background:linear-gradient(90deg,#0a246a,#4a72ac)"></div>
<svg width="640" height="250" viewBox="0 0 640 250">
<rect x="27" y="233" width="16" height="15" fill="#c8c0e0"/><circle cx="35" cy="240.5" r="6" fill="#10308c"/><path d="M32 237L37 236L39 241L35 246L33 242Z" fill="#e8a020"/>
</svg>
<div class="t" style="left:46px;top:233px;color:#fff;font-weight:bold;line-height:16px;letter-spacing:1px">编写指示</div>

<div class="up" style="left:27px;top:252px;width:255px;height:23px;text-align:center;line-height:21px;border-color:#fff #999 #999 #fff;box-shadow:none">铣板</div>
<div style="left:27px;top:276px;width:255px;height:85px;border:1px solid;border-color:#fff"></div>
<div class="t mo" style="left:34px;top:289px;font-size:12px;line-height:14px;transform:scaleX(.9);transform-origin:0 0">PN</div>
<div class="sk t mo" style="left:62px;top:283px;width:75px;height:19px;font-size:11px;line-height:15px;padding-left:1px;letter-spacing:-.3px">8S7LJ01PA0</div>
<div class="t" style="left:157px;top:286px">版本</div>
<div class="sk" style="left:190px;top:281px;width:89px;height:19px"></div>
<div class="t" style="left:33px;top:310px">编写</div>
<div class="sk t" style="left:62px;top:307px;width:75px;height:20px;line-height:15px;padding-left:1px">刘国强</div>
<div class="t" style="left:156px;top:310px">审核</div>
<div class="sk" style="left:190px;top:307px;width:89px;height:19px"></div>
<div class="t mo" style="left:33px;top:335px;font-size:12px;line-height:14px;transform:scaleX(.9);transform-origin:0 0">PPQE</div>
<div class="sk" style="left:62px;top:333px;width:75px;height:19px"></div>
<div class="t" style="left:153px;top:334px">文控</div>
<div class="sk" style="left:190px;top:333px;width:89px;height:19px"></div>

<div style="left:27px;top:363px;width:46px;height:19px;border:1px solid;border-color:#fff #888 #fff #fff;text-align:center;line-height:16px">常规</div>
<div style="left:74px;top:361px;width:51px;height:21px;border-right:2px solid #444;border-top:1px solid #fff;text-align:center;line-height:16px;background:#d4d0c8">参数</div>
<div style="left:125px;top:381px;width:160px;height:1px;background:#fff"></div>
<div style="left:284px;top:381px;width:1px;height:340px;background:#999"></div>
<div class="t" style="left:133px;top:381px">刀径表</div>

<!-- table 1 -->
<div class="sk" style="left:31px;top:401px;width:250px;height:79px;border-color:#555 #fff #fff #555"></div>
<div class="h mo" style="left:32px;top:402px;width:41px;font-size:11px">No</div>
<div class="h" style="left:73px;top:402px;width:59px">直径<span style="font-size:10px" class="mo">(mm)</span></div>
<div class="h" style="left:132px;top:402px;width:46px">类别</div>
<div class="h" style="left:178px;top:402px;width:47px">铣长<span style="font-size:10px" class="mo">(M)</span></div>
<div class="t" style="left:33px;top:419px;line-height:16px">01</div>
<div class="t mo" style="left:74px;top:420px;font-size:11.500px;line-height:16px">0.000</div>
<div style="left:32px;top:435px;width:193px;height:1px;background:#bdb9b1"></div>
<div class="v" style="left:73px;top:419px;height:16px"></div><div class="v" style="left:131px;top:419px;height:16px"></div><div class="v" style="left:177px;top:419px;height:16px"></div><div class="v" style="left:224px;top:419px;height:16px"></div>
<div class="d" style="left:264px;top:402px;width:16px;height:77px"></div>
<div class="up ar" style="left:264px;top:402px;width:16px;height:16px">▲</div>
<div class="up" style="left:264px;top:418px;width:16px;height:16px"></div>
<div class="up ar" style="left:264px;top:463px;width:16px;height:16px">▼</div>
<div class="up t dis" style="left:32px;top:480px;width:249px;height:18px;text-align:center;line-height:16px">导入刀径</div>
<div class="t" style="left:136px;top:498px">参数表</div>

<!-- table 2 -->
<div class="sk" style="left:31px;top:517px;width:250px;height:95px;border-color:#555 #fff #fff #555"></div>
<div class="h mo" style="left:32px;top:518px;width:41px;font-size:11px">No</div>
<div class="h" style="left:73px;top:518px;width:59px">成长<span style="font-size:10px" class="mo">(mm)</span></div>
<div class="h" style="left:132px;top:518px;width:59px">成宽<span style="font-size:10px" class="mo">(mm)</span></div>
<div class="h" style="left:191px;top:518px;width:41px">数量</div>
<div class="h" style="left:232px;top:518px;width:33px">+</div>
<div style="left:32px;top:551px;width:232px;height:1px;background:#bdb9b1"></div>
<div class="v" style="left:73px;top:535px;height:16px"></div><div class="v" style="left:131px;top:535px;height:16px"></div><div class="v" style="left:190px;top:535px;height:16px"></div><div class="v" style="left:231px;top:535px;height:16px"></div>
<div class="up ar" style="left:265px;top:518px;width:15px;height:16px">▲</div>
<div class="up" style="left:265px;top:534px;width:15px;height:44px"></div>
<div class="up ar" style="left:265px;top:579px;width:15px;height:15px">▼</div>
<div class="d" style="left:64px;top:595px;width:184px;height:15px"></div>
<div class="up ar" style="left:33px;top:595px;width:15px;height:15px">◀</div>
<div class="up" style="left:48px;top:595px;width:16px;height:15px"></div>
<div class="up ar" style="left:248px;top:595px;width:15px;height:15px">▶</div>

<!-- tolerance -->
<div style="left:27px;top:619px;width:255px;height:54px;border:1px solid;border-color:#999 #fff #fff #999"></div>
<div class="h" style="left:29px;top:621px;width:66px">铣板公差</div>
<div class="h" style="left:95px;top:621px;width:77px;font-family:'Liberation Mono',monospace;font-size:11px">+mm</div>
<div class="h" style="left:172px;top:621px;width:91px;font-family:'Liberation Mono',monospace;font-size:11px">-mm</div>
<div class="t" style="left:30px;top:637px;line-height:16px">孔-边</div>
<div class="t" style="left:30px;top:654px;line-height:16px">边-边</div>
<div class="t mo" style="left:96px;top:655px;font-size:11.500px;line-height:16px">0.150</div>
<div class="t mo" style="left:173px;top:655px;font-size:11.500px;line-height:16px">0.150</div>
<div style="left:29px;top:654px;width:234px;height:1px;background:#bdb9b1"></div>
<div class="v" style="left:94px;top:638px;height:33px"></div><div class="v" style="left:171px;top:638px;height:33px"></div>
<div class="d" style="left:265px;top:621px;width:15px;height:50px"></div>
<div class="up ar" style="left:265px;top:621px;width:15px;height:16px">▲</div>
<div class="up" style="left:265px;top:637px;width:15px;height:8px"></div>
<div class="up ar" style="left:265px;top:655px;width:15px;height:16px">▼</div>

<!-- notes -->
<div style="left:27px;top:673px;width:255px;height:1px;background:#fff"></div>
<div style="left:32px;top:677px;width:13px;line-height:12px;text-align:center">工艺备注</div>
<div class="sk" style="left:49px;top:677px;width:232px;height:56px;border-color:#555 #fff #fff #555"></div>
<div class="d" style="left:265px;top:678px;width:15px;height:53px"></div>
<div class="up ar dis" style="left:265px;top:678px;width:15px;height:16px">▲</div>
<div class="up ar dis" style="left:265px;top:715px;width:15px;height:16px">▼</div>
<div class="t" style="left:32px;top:736px;height:7px;overflow:hidden;line-height:12px">型</div>
<div style="left:49px;top:735px;width:232px;height:8px;border-top:1px solid #555;border-left:1px solid #555"></div>
<div class="up" style="left:265px;top:737px;width:15px;height:6px"></div>

<!-- right table -->
<div style="left:290px;top:254px;width:348px;height:436px;border-left:2px solid #666;border-top:2px solid #666;overflow:hidden">
<div class="h" style="left:0;top:0;width:79px;height:18px;line-height:16px">工艺名称</div>
<div class="h" style="left:79px;top:0;width:51px;height:18px;line-height:16px">编写</div>
<div class="h" style="left:130px;top:0;width:51px;height:18px;line-height:16px">审核</div>
<div class="h mo" style="left:181px;top:0;width:51px;height:18px;line-height:16px;font-size:11px">PPQE</div>
<div class="h mo" style="left:232px;top:0;width:51px;height:18px;line-height:16px;font-size:11px">PPC</div>
<div class="h" style="left:283px;top:0;width:51px;height:18px;line-height:16px">文控</div>
<div class="h" style="left:334px;top:0;width:20px;height:18px"></div>
<div style="left:0;top:18px;width:345px;height:391px">
<div class="r"><b>钻孔</b><b>刘国强</b><i>已</i></div>
<div class="r"><b>铣槽孔</b><b>刘国强</b><i>已</i></div>
<div class="r"><b>去毛刺</b><b>刘国强</b><i>已</i></div>
<div class="r"><b>沉铜</b><b>刘国强</b><i>已</i></div>
<div class="r"><b>板镀</b><b>刘国强</b><i>已</i></div>
<div class="r"><b>外层干膜</b><b>刘国强</b><i>已</i></div>
<div class="r"><b>干膜检查</b><b>刘国强</b><i>已</i></div>
<div class="r"><b>图形电镀</b><b>刘国强</b><i>已</i></div>
<div class="r"><b>外层蚀刻</b><b>刘国强</b><i>已</i></div>
<div class="r"><b>硫脲洗</b><b>刘国强</b><i>已</i></div>
<div class="r"><b>外层AOI</b><b>刘国强</b><i>已</i></div>
<div class="r"><b>阻焊塞孔</b><b>刘国强</b><i>已</i></div>
<div class="r"><b>阻焊</b><b>刘国强</b><i>已</i></div>
<div class="r"><b>阻焊检查</b><b>刘国强</b><i>已</i></div>
<div class="r"><b>字符</b><b>汪朝文</b><i>已</i></div>
<div class="r"><b>沉金前处理</b><b>刘国强</b><i>已</i></div>
<div class="r"><b>沉金</b><b>刘国强</b><i>已</i></div>
<div class="r"><b>阻抗测试</b><b>刘国强</b><i>已</i></div>
<div class="r"><b>电子测试</b><b>刘国强</b><i>已</i></div>
<div class="r"><b>二钻</b><b>刘国强</b><i>已</i></div>
<div class="r s"><b>铣板</b><b>刘国强</b><i>已</i></div>
<div class="r"><b>终检</b><b>刘国强</b><i>已</i></div>
<div class="r"><b>包装</b><b>刘国强</b><i>已</i></div>
<div class="r"><b>成品仓</b><b>刘国强</b><i>已</i></div>
</div>
<div class="v" style="left:79px;top:18px;height:408px;background:rgba(189,185,177,.8)"></div>
<div class="v" style="left:130px;top:18px;height:408px;background:rgba(189,185,177,.8)"></div>
<div class="v" style="left:181px;top:18px;height:408px;background:rgba(189,185,177,.8)"></div>
<div class="v" style="left:232px;top:18px;height:408px;background:rgba(189,185,177,.8)"></div>
<div class="v" style="left:283px;top:18px;height:408px;background:rgba(189,185,177,.8)"></div>
<div class="v" style="left:334px;top:18px;height:408px;background:rgba(189,185,177,.8)"></div>
</div>
<div style="left:290px;top:691px;width:348px;height:2px;background:#fff"></div>

<div style="left:291px;top:698px;width:298px;height:30px;background:#fff;border:1px solid;border-color:#444 #999 #fff #444"></div>
<div class="up ar dis" style="left:573px;top:699px;width:16px;height:28px;line-height:26px">▼</div>
<div style="left:595px;top:698px;width:43px;height:32px;background:#fff;border:1px solid;border-color:#444 #fff #fff #444"></div>
<div style="left:290px;top:731px;width:150px;height:12px;border-top:1px solid #fff"></div>
<div style="left:440px;top:731px;width:148px;height:12px;border:1px solid;border-color:#555 #fff #fff #555"></div>
<div class="t" style="left:595px;top:734px;width:43px;height:9px;border-top:1px solid #fff;color:#888;font-size:9px;line-height:8px;padding-left:5px">· · · · ·</div>

<!-- dialog status -->
<div style="left:18px;top:743px;width:622px;height:28px;background:#d4d0c8;border-top:1px solid #fff"></div>
<div style="left:20px;top:746px;width:60px;height:23px;border:1px solid;border-color:#999 #fff #fff #999"></div>
<div style="left:82px;top:746px;width:58px;height:23px;border:1px solid;border-color:#999 #fff #fff #999"></div>
<div style="left:142px;top:746px;width:249px;height:23px;border:1px solid;border-color:#999 #fff #fff #999"></div>
<div style="left:393px;top:746px;width:245px;height:23px;border:1px solid;border-color:#999 #fff #fff #999"></div>
<svg width="640" height="772" viewBox="0 0 640 772"><path d="M637 758L626 769M637 761L629 769M637 764L632 769M637 767L635 769" stroke="#777" fill="none"/><path d="M637 759L627 769M637 762L630 769M637 765L633 769" stroke="#fff" fill="none"/></svg>

</div></body></html>
